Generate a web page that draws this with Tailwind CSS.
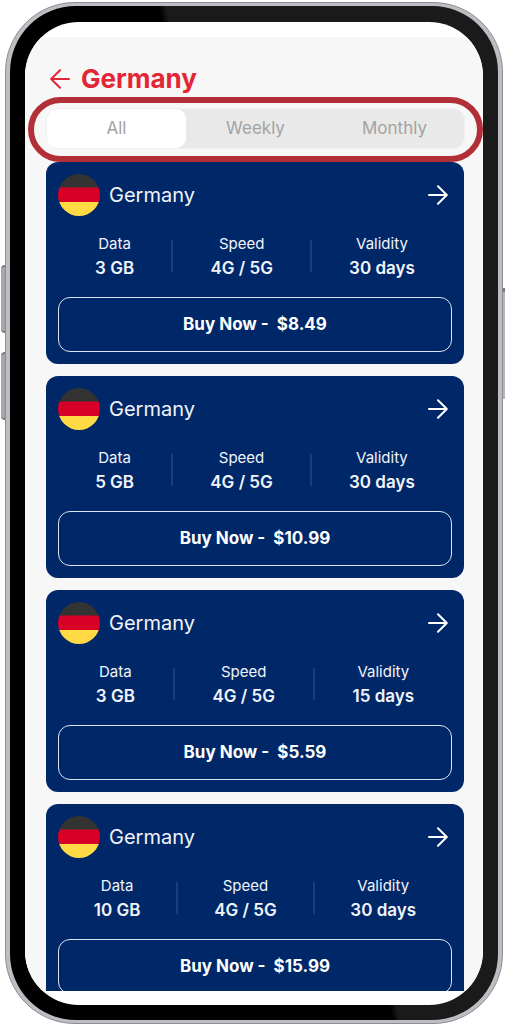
<!DOCTYPE html>
<html lang="en">
<head>
<meta charset="utf-8">
<meta name="viewport" content="width=device-width, initial-scale=1">
<title>Germany plans</title>
<script src="https://cdn.jsdelivr.net/npm/@tailwindcss/browser@4"></script>
</head>
<body class="bg-white font-['Inter',sans-serif]">
<svg class="hidden" aria-hidden="true">
  <symbol id="flag" viewBox="0 0 42 42">
    <rect width="42" height="14" fill="#333333"/>
    <rect y="13.5" width="42" height="15" fill="#d80027"/>
    <rect y="28" width="42" height="14" fill="#ffda44"/>
  </symbol>
  <symbol id="arrow" viewBox="0 0 20 20">
    <path d="M1 10H18.500M10 1.300L18.800 10L10 18.700" fill="none" stroke="currentColor" stroke-width="2" stroke-linecap="round" stroke-linejoin="round"/>
  </symbol>
</svg>

<div class="relative h-screen pt-[2px] pr-[2px] pl-[5px]">
  <!-- side keys -->
  <span class="absolute left-px top-[265px] h-[68px] w-[6px] rounded-l-sm border-y-2 border-[#77797b] bg-[#a5a7a9]"></span>
  <span class="absolute left-px top-[352px] h-[68px] w-[6px] rounded-l-sm border-y-2 border-[#77797b] bg-[#a5a7a9]"></span>
  <span class="absolute right-0 top-[288px] h-[111px] w-[4px] border-t-4 border-[#77797b] bg-[#b5b6b9]"></span>

  <!-- metal rim, bezel, screen -->
  <div class="relative h-full rounded-[70px] border border-[#8b8d90] bg-[#bdbec3] p-[4px] pt-[3px] pb-[3px]">
    <div class="h-full rounded-[66px] bg-[linear-gradient(77deg,#000_53%,#1a1a1a_54%)] px-[15px] pt-4 pb-[15px]">
      <main class="flex h-full flex-col overflow-hidden rounded-[54px] bg-white pt-[15px] pb-[14px]">
        <div class="flex min-h-0 flex-1 flex-col overflow-hidden bg-[#f7f7f7]">
          <header class="flex h-[60px] shrink-0 items-end gap-[11px] pl-[25px] text-[#e32636]">
            <button type="button" aria-label="Back" class="mb-[8px]"><svg class="size-5 rotate-180"><use href="#arrow"/></svg></button>
            <h1 class="text-[26px] leading-9 font-bold">Germany</h1>
          </header>

          <div class="ml-[3px] shrink-0 rounded-full border-6 border-[#b32f37] px-3 pt-[5px] pb-[7px]">
            <div role="tablist" class="grid h-[41px] grid-cols-3 rounded-xl border border-[#f0f0f0] bg-[#e9e9e9] text-[17px] text-[#a3a3a3]">
              <button type="button" role="tab" aria-selected="true" class="rounded-[10px] bg-white">All</button>
              <button type="button" role="tab" aria-selected="false">Weekly</button>
              <button type="button" role="tab" aria-selected="false">Monthly</button>
            </div>
          </div>

          <div class="flex min-h-0 flex-1 flex-col gap-3 overflow-hidden pr-[19px] pl-[21px] text-[#f1f4fa]">
            <article class="shrink-0 rounded-xl bg-[#002868] p-3">
              <div class="flex items-center gap-[9px]">
                <svg class="size-[42px] rounded-full"><use href="#flag"/></svg>
                <h2 class="flex-1 text-[20px] leading-[42px]">Germany</h2>
                <a href="#plan-1" aria-label="View plan" class="mr-1 text-white"><svg class="size-5"><use href="#arrow"/></svg></a>
              </div>
              <dl class="mt-[15px] mb-4 flex items-center justify-evenly text-center">
                <div><dt class="text-[15px] leading-[25px]">Data</dt><dd class="text-[17px] leading-[25px] font-semibold">3 GB</dd></div>
                <div class="h-8 w-[2px] bg-[#1c3e78]"></div>
                <div><dt class="text-[15px] leading-[25px]">Speed</dt><dd class="text-[17px] leading-[25px] font-semibold">4G / 5G</dd></div>
                <div class="h-8 w-[2px] bg-[#1c3e78]"></div>
                <div><dt class="text-[15px] leading-[25px]">Validity</dt><dd class="text-[17px] leading-[25px] font-semibold">30 days</dd></div>
              </dl>
              <button type="button" class="h-[55px] w-full rounded-xl border border-[#dbe3ef] text-[17px] font-bold whitespace-pre text-white">Buy Now -  $8.49</button>
            </article>

            <article class="shrink-0 rounded-xl bg-[#002868] p-3">
              <div class="flex items-center gap-[9px]">
                <svg class="size-[42px] rounded-full"><use href="#flag"/></svg>
                <h2 class="flex-1 text-[20px] leading-[42px]">Germany</h2>
                <a href="#plan-2" aria-label="View plan" class="mr-1 text-white"><svg class="size-5"><use href="#arrow"/></svg></a>
              </div>
              <dl class="mt-[15px] mb-4 flex items-center justify-evenly text-center">
                <div><dt class="text-[15px] leading-[25px]">Data</dt><dd class="text-[17px] leading-[25px] font-semibold">5 GB</dd></div>
                <div class="h-8 w-[2px] bg-[#1c3e78]"></div>
                <div><dt class="text-[15px] leading-[25px]">Speed</dt><dd class="text-[17px] leading-[25px] font-semibold">4G / 5G</dd></div>
                <div class="h-8 w-[2px] bg-[#1c3e78]"></div>
                <div><dt class="text-[15px] leading-[25px]">Validity</dt><dd class="text-[17px] leading-[25px] font-semibold">30 days</dd></div>
              </dl>
              <button type="button" class="h-[55px] w-full rounded-xl border border-[#dbe3ef] text-[17px] font-bold whitespace-pre text-white">Buy Now -  $10.99</button>
            </article>

            <article class="shrink-0 rounded-xl bg-[#002868] p-3">
              <div class="flex items-center gap-[9px]">
                <svg class="size-[42px] rounded-full"><use href="#flag"/></svg>
                <h2 class="flex-1 text-[20px] leading-[42px]">Germany</h2>
                <a href="#plan-3" aria-label="View plan" class="mr-1 text-white"><svg class="size-5"><use href="#arrow"/></svg></a>
              </div>
              <dl class="mt-[15px] mb-4 flex items-center justify-evenly text-center">
                <div><dt class="text-[15px] leading-[25px]">Data</dt><dd class="text-[17px] leading-[25px] font-semibold">3 GB</dd></div>
                <div class="h-8 w-[2px] bg-[#1c3e78]"></div>
                <div><dt class="text-[15px] leading-[25px]">Speed</dt><dd class="text-[17px] leading-[25px] font-semibold">4G / 5G</dd></div>
                <div class="h-8 w-[2px] bg-[#1c3e78]"></div>
                <div><dt class="text-[15px] leading-[25px]">Validity</dt><dd class="text-[17px] leading-[25px] font-semibold">15 days</dd></div>
              </dl>
              <button type="button" class="h-[55px] w-full rounded-xl border border-[#dbe3ef] text-[17px] font-bold whitespace-pre text-white">Buy Now -  $5.59</button>
            </article>

            <article class="shrink-0 rounded-xl bg-[#002868] p-3">
              <div class="flex items-center gap-[9px]">
                <svg class="size-[42px] rounded-full"><use href="#flag"/></svg>
                <h2 class="flex-1 text-[20px] leading-[42px]">Germany</h2>
                <a href="#plan-4" aria-label="View plan" class="mr-1 text-white"><svg class="size-5"><use href="#arrow"/></svg></a>
              </div>
              <dl class="mt-[15px] mb-4 flex items-center justify-evenly text-center">
                <div><dt class="text-[15px] leading-[25px]">Data</dt><dd class="text-[17px] leading-[25px] font-semibold">10 GB</dd></div>
                <div class="h-8 w-[2px] bg-[#1c3e78]"></div>
                <div><dt class="text-[15px] leading-[25px]">Speed</dt><dd class="text-[17px] leading-[25px] font-semibold">4G / 5G</dd></div>
                <div class="h-8 w-[2px] bg-[#1c3e78]"></div>
                <div><dt class="text-[15px] leading-[25px]">Validity</dt><dd class="text-[17px] leading-[25px] font-semibold">30 days</dd></div>
              </dl>
              <button type="button" class="h-[55px] w-full rounded-xl border border-[#dbe3ef] text-[17px] font-bold whitespace-pre text-white">Buy Now -  $15.99</button>
            </article>
          </div>
        </div>
      </main>
    </div>
  </div>
</div>
</body>
</html>
